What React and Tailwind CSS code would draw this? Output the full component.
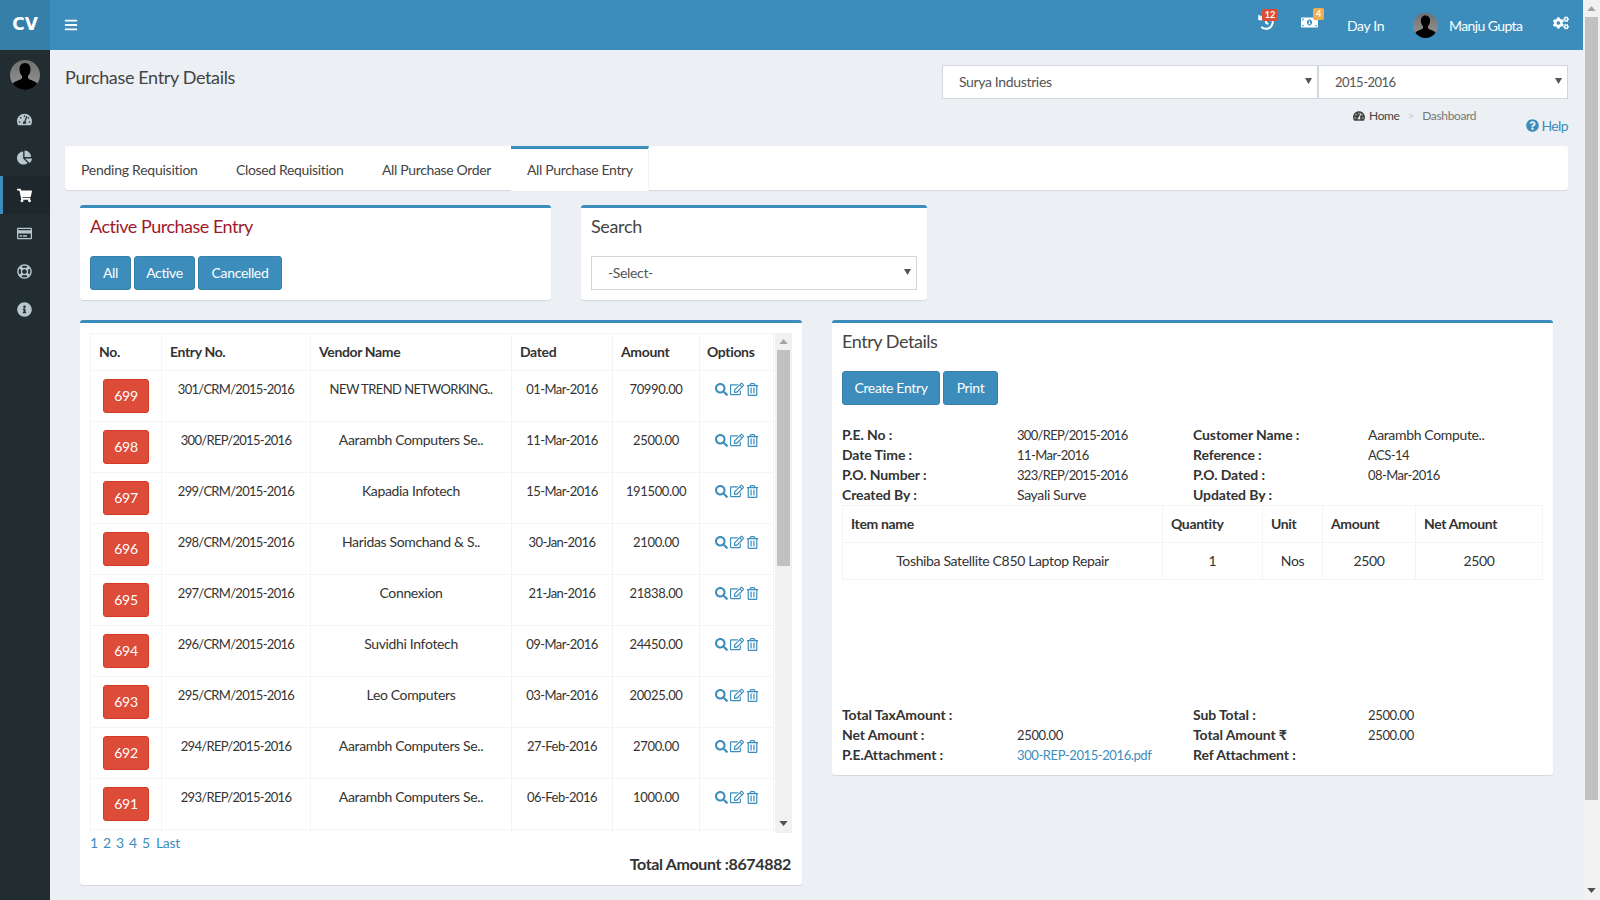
import React from "react";
import { FaTachometerAlt, FaChartPie, FaShoppingCart, FaRegCreditCard, FaRegLifeRing, FaInfoCircle, FaBars, FaHistory, FaMoneyBillAlt, FaCogs, FaSearch, FaRegEdit, FaRegTrashAlt, FaQuestionCircle } from "react-icons/fa";

const rows = [
  ["699", "301/CRM/2015-2016", "NEW TREND NETWORKING..", "01-Mar-2016", "70990.00"],
  ["698", "300/REP/2015-2016", "Aarambh Computers Se..", "11-Mar-2016", "2500.00"],
  ["697", "299/CRM/2015-2016", "Kapadia Infotech", "15-Mar-2016", "191500.00"],
  ["696", "298/CRM/2015-2016", "Haridas Somchand & S..", "30-Jan-2016", "2100.00"],
  ["695", "297/CRM/2015-2016", "Connexion", "21-Jan-2016", "21838.00"],
  ["694", "296/CRM/2015-2016", "Suvidhi Infotech", "09-Mar-2016", "24450.00"],
  ["693", "295/CRM/2015-2016", "Leo Computers", "03-Mar-2016", "20025.00"],
  ["692", "294/REP/2015-2016", "Aarambh Computers Se..", "27-Feb-2016", "2700.00"],
  ["691", "293/REP/2015-2016", "Aarambh Computers Se..", "06-Feb-2016", "1000.00"],
];

const ENTRY = "text-[13px] tracking-[-0.7px]";
const DATE = "text-[13px] tracking-[-0.55px]";
const MONEY = "text-[13px] tracking-[-0.35px]";
const CAPS = "text-[13px] tracking-[-0.55px]";

function numericClass(t) {
  if (/^\d+\/[A-Z]+\//.test(t)) return ENTRY;
  if (/^\d\d-[A-Z][a-z]+-/.test(t) || t === "ACS-14") return DATE;
  if (/^\d+\.\d\d$/.test(t)) return MONEY;
  if (t === t.toUpperCase() && /[A-Z]{4}/.test(t)) return CAPS;
  if (t.endsWith(".pdf")) return "text-[13px] tracking-[-0.4px] text-[#3c8dbc]";
  return "";
}

function Avatar({ size }) {
  return (
    <svg viewBox="0 0 30 30" width={size} height={size} className="rounded-full shrink-0">
      <defs>
        <linearGradient id="av" x1="0" y1="0" x2="0" y2="1">
          <stop offset="0" stopColor="#6f6f6f" />
          <stop offset="0.7" stopColor="#8c8c8c" />
          <stop offset="1" stopColor="#555" />
        </linearGradient>
      </defs>
      <rect width="30" height="30" fill="url(#av)" />
      <path d="M15 3c3.600 0 5.500 2.800 5.500 6.200 0 2.900-1.200 5.300-2.500 6.600v2.200c0 1.200 3.500 2.100 6.500 3.500 2.500 1.200 3.500 3 3.500 5.500v3H2v-3c0-2.500 1-4.300 3.500-5.500 3-1.400 6.500-2.300 6.500-3.500v-2.200c-1.300-1.300-2.500-3.700-2.500-6.600C9.500 5.800 11.400 3 15 3z" fill="#000" />
    </svg>
  );
}

function Arrow() {
  return (
    <svg viewBox="0 0 8 8" className="absolute right-[6px] top-[12px] w-[7px] h-[7px] pointer-events-none">
      <path d="M0 1h8L4 8z" fill="#555" />
    </svg>
  );
}

function Select({ value, className, pad }) {
  return (
    <div className={`relative ${className}`}>
      <select defaultValue={value} className={`appearance-none w-full h-[34px] bg-white border border-[#d2d6de] text-[#555] outline-none ${pad}`}>
        <option>{value}</option>
      </select>
      <Arrow />
    </div>
  );
}

function SideItem({ Icon, active }) {
  return (
    <div className={`h-[38px] flex items-center justify-center border-l-[3px] pr-[4px] ${active ? "border-[#3c8dbc] bg-[#1e282c] text-white" : "border-transparent text-[#b8c7ce]"}`}>
      <Icon className="text-[15px]" />
    </div>
  );
}

function Btn({ children, className = "" }) {
  return (
    <button className={`h-[34px] pb-px rounded-[3px] bg-[#3c8dbc] border border-[#367fa9] text-white text-[14px] ${className}`}>{children}</button>
  );
}

function Info({ items }) {
  return (
    <div className="grid grid-cols-[175px_176px_175px_1fr] text-[14px] leading-[20px] text-[#333]">
      {items.map((t, i) => (
        <div key={i} className={i % 2 === 0 ? "font-bold tracking-[-0.1px]" : numericClass(t)}>{t}</div>
      ))}
    </div>
  );
}

function ScrollArrow({ up }) {
  return (
    <svg viewBox="0 0 10 6" className="w-[9px] h-[5px] mx-auto">
      <path d={up ? "M5 0l5 6H0z" : "M0 0h10L5 6z"} fill={up ? "#a3a3a3" : "#505050"} />
    </svg>
  );
}

export default function App() {
  return (
    <div className="flex w-[1600px] h-[900px] overflow-hidden bg-[#ecf0f5] text-[#333] text-[14px] font-['Lato',sans-serif] tracking-[-0.35px]">
      <div className="flex-1 flex flex-col min-w-0">
        <header className="h-[50px] bg-[#3c8dbc] flex items-center text-white shrink-0">
          <div className="w-[50px] h-[50px] bg-[#367fa9] flex items-center justify-center font-['DejaVu_Sans',sans-serif] font-bold text-[17px] tracking-normal">CV</div>
          <FaBars className="ml-[14px] text-[14px]" />
          <div className="ml-auto flex items-center h-full">
            <div className="relative w-[17px] mr-[26px] -mt-[6px]">
              <FaHistory className="text-[16px]" />
              <span className="absolute left-[4px] -top-[5px] w-[16px] h-[12px] rounded-[2px] bg-[#dd4b39] text-[9px] font-bold leading-[12px] text-center tracking-normal">12</span>
            </div>
            <div className="relative w-[17px] mr-[29px] -mt-[5px]">
              <FaMoneyBillAlt className="text-[17px]" />
              <span className="absolute left-[12px] -top-[6px] w-[11px] h-[12px] rounded-[2px] bg-[#f0ad4e] text-[9px] font-bold leading-[12px] text-center tracking-normal">4</span>
            </div>
            <span className="w-[66px]">Day In</span>
            <Avatar size={25} />
            <span className="ml-[11px] w-[104px] tracking-[-0.6px]">Manju Gupta</span>
            <FaCogs className="text-[16px] mr-[14px] -mt-[5px]" />
          </div>
        </header>

        <main className="flex-1 flex min-h-0">
          <nav className="w-[50px] bg-[#222d32] shrink-0 flex flex-col">
            <div className="h-[50px] flex items-start justify-center pt-[10px]"><Avatar size={30} /></div>
            <SideItem Icon={FaTachometerAlt} />
            <SideItem Icon={FaChartPie} />
            <SideItem Icon={FaShoppingCart} active />
            <SideItem Icon={FaRegCreditCard} />
            <SideItem Icon={FaRegLifeRing} />
            <SideItem Icon={FaInfoCircle} />
          </nav>

          <div className="flex-1 min-w-0 px-[15px] pt-[15px]">
            <div className="flex justify-between h-[81px]">
              <h1 className="text-[18px] leading-[24px] text-[#444] font-normal">Purchase Entry Details</h1>
              <div className="w-[626px]">
                <div className="flex">
                  <Select value="Surya Industries" className="w-[376px]" pad="pl-[16px] pb-[2px]" />
                  <Select value="2015-2016" className="w-[250px] text-[13px] tracking-[-0.5px]" pad="pl-[16px] pt-[2px]" />
                </div>
                <div className="relative flex items-center h-[20px] mt-[7px] pl-[411px] text-[12px] text-[#444]">
                  <FaTachometerAlt className="text-[12px] mr-[4px]" />
                  <span>Home</span>
                  <span className="mx-[8px] text-[#ccc]">&gt;</span>
                  <span className="text-[#777]">Dashboard</span>
                  <span className="absolute right-0 top-[9px] flex items-center gap-[2px] text-[14px] tracking-[-0.6px] text-[#3c8dbc]"><FaQuestionCircle className="text-[13px]" />Help</span>
                </div>
              </div>
            </div>

            <div className="relative h-[44px] bg-white rounded-[3px] shadow-[0_1px_1px_rgba(0,0,0,0.1)] flex">
              <div className="w-[155px] pl-[16px] pt-[14px] leading-[20px] text-[#444] tracking-[-0.25px]">Pending Requisition</div>
              <div className="w-[146px] pl-[16px] pt-[14px] leading-[20px] text-[#444]">Closed Requisition</div>
              <div className="w-[145px] pl-[16px] pt-[14px] leading-[20px] text-[#444]">All Purchase Order</div>
              <div className="w-[138px] h-[45px] pl-[16px] pt-[11px] leading-[20px] text-[#444] bg-white border-t-[3px] border-r border-[#3c8dbc] border-r-[#f4f4f4]">All Purchase Entry</div>
            </div>

            <div className="mx-[15px] mt-[15px] flex gap-[30px]">
              <section className="w-[471px] h-[95px] bg-white rounded-[3px] border-t-[3px] border-[#3c8dbc] shadow-[0_1px_1px_rgba(0,0,0,0.1)] px-[10px] pt-[6px]">
                <h3 className="text-[18px] leading-[24px] text-[#a0182a] tracking-[-0.5px]">Active Purchase Entry</h3>
                <div className="flex gap-[3px] mt-[18px]">
                  <Btn className="w-[41px]">All</Btn>
                  <Btn className="w-[61px]">Active</Btn>
                  <Btn className="w-[84px]">Cancelled</Btn>
                </div>
              </section>
              <section className="w-[346px] h-[95px] bg-white rounded-[3px] border-t-[3px] border-[#3c8dbc] shadow-[0_1px_1px_rgba(0,0,0,0.1)] px-[10px] pt-[6px]">
                <h3 className="text-[18px] leading-[24px] text-[#444]">Search</h3>
                <Select value="-Select-" className="mt-[18px]" pad="pl-[16px] pb-[2px]" />
              </section>
            </div>

            <div className="mx-[15px] mt-[20px] flex gap-[30px] items-start">
              <section className="w-[722px] h-[565px] bg-white rounded-[3px] border-t-[3px] border-[#3c8dbc] shadow-[0_1px_1px_rgba(0,0,0,0.1)] px-[10px] pt-[10px]">
                <div className="flex h-[500px] overflow-hidden">
                  <table className="w-[683px] h-fit table-fixed border-collapse text-[14px] leading-[20px]">
                    <colgroup>
                      <col className="w-[71px]" />
                      <col className="w-[149px]" />
                      <col className="w-[201px]" />
                      <col className="w-[101px]" />
                      <col className="w-[87px]" />
                      <col className="w-[74px]" />
                    </colgroup>
                    <thead>
                      <tr className="h-[37px]">
                        {["No.", "Entry No.", "Vendor Name", "Dated", "Amount", "Options"].map((h) => (
                          <th key={h} className={`border border-[#f4f4f4] text-left font-bold ${h === "Options" ? "pl-[7px]" : "pl-[8px]"}`}>{h}</th>
                        ))}
                      </tr>
                    </thead>
                    <tbody>
                      {rows.map((r) => (
                        <tr key={r[0]} className="h-[51px]">
                          <td className="border border-[#f4f4f4] pt-[8px] align-top">
                            <div className="mx-auto w-[46px] h-[34px] rounded-[3px] bg-[#dd4b39] border border-[#d73925] text-white flex items-center justify-center">{r[0]}</div>
                          </td>
                          {r.slice(1).map((c, i) => (
                            <td key={i} className={`border border-[#f4f4f4] pt-[8px] align-top text-center ${numericClass(c)}`}>{c}</td>
                          ))}
                          <td className="border border-[#f4f4f4] pt-[11px] align-top">
                            <div className="flex items-center text-[#3c8dbc] text-[14px] gap-[2px] pl-[15px]">
                              <FaSearch className="text-[13px]" />
                              <FaRegEdit />
                              <FaRegTrashAlt className="text-[13px]" />
                            </div>
                          </td>
                        </tr>
                      ))}
                      <tr className="h-[51px]">
                        {[0, 1, 2, 3, 4, 5].map((i) => (
                          <td key={i} className="border border-[#f4f4f4]" />
                        ))}
                      </tr>
                    </tbody>
                  </table>
                  <div className="ml-[1px] w-[17px] h-[500px] bg-[#f1f1f1] flex flex-col pt-[6px]">
                    <ScrollArrow up />
                    <div className="mt-[6px] mx-[2px] h-[216px] bg-[#c1c1c1]" />
                    <div className="mt-auto mb-[7px]"><ScrollArrow /></div>
                  </div>
                </div>
                <div className="flex gap-[5px] leading-[20px] text-[#3c8dbc]">
                  <span className="w-[8px]">1</span><span className="w-[8px]">2</span><span className="w-[8px]">3</span><span className="w-[8px]">4</span><span className="w-[8px]">5</span>
                  <span className="ml-[1px]">Last</span>
                </div>
                <div className="text-right pr-[1px] text-[16px] leading-[22px] font-bold">Total Amount :8674882</div>
              </section>

              <section className="w-[721px] h-[455px] bg-white rounded-[3px] border-t-[3px] border-[#3c8dbc] shadow-[0_1px_1px_rgba(0,0,0,0.1)] px-[10px] pt-[6px]">
                <h3 className="text-[18px] leading-[24px] text-[#444] tracking-[-0.45px]">Entry Details</h3>
                <div className="flex gap-[3px] mt-[18px]">
                  <Btn className="w-[98px]">Create Entry</Btn>
                  <Btn className="w-[55px]">Print</Btn>
                </div>
                <div className="mt-[20px]">
                  <Info items={["P.E. No :", "300/REP/2015-2016", "Customer Name :", "Aarambh Compute..", "Date Time :", "11-Mar-2016", "Reference :", "ACS-14", "P.O. Number :", "323/REP/2015-2016", "P.O. Dated :", "08-Mar-2016", "Created By :", "Sayali Surve", "Updated By :", ""]} />
                </div>
                <table className="w-[700px] table-fixed border-collapse leading-[20px]">
                  <colgroup>
                    <col className="w-[320px]" />
                    <col className="w-[100px]" />
                    <col className="w-[60px]" />
                    <col className="w-[93px]" />
                    <col className="w-[127px]" />
                  </colgroup>
                  <thead>
                    <tr className="h-[37px]">
                      {["Item name", "Quantity", "Unit", "Amount", "Net Amount"].map((h) => (
                        <th key={h} className="border border-[#f4f4f4] pl-[8px] text-left font-bold">{h}</th>
                      ))}
                    </tr>
                  </thead>
                  <tbody>
                    <tr className="h-[37px]">
                      {["Toshiba Satellite C850 Laptop Repair", "1", "Nos", "2500", "2500"].map((c, i) => (
                        <td key={i} className="border border-[#f4f4f4] text-center">{c}</td>
                      ))}
                    </tr>
                  </tbody>
                </table>
                <div className="mt-[125px]">
                  <Info items={["Total TaxAmount :", "", "Sub Total :", "2500.00", "Net Amount :", "2500.00", "Total Amount ₹", "2500.00", "P.E.Attachment :", "300-REP-2015-2016.pdf", "Ref Attachment :", ""]} />
                </div>
              </section>
            </div>
          </div>
        </main>
      </div>

      <div className="w-[17px] h-full bg-[#f1f1f1] shrink-0 flex flex-col pt-[6px]">
        <ScrollArrow up />
        <div className="mt-[6px] mx-[2px] h-[783px] bg-[#c1c1c1]" />
        <div className="mt-auto mb-[7px]"><ScrollArrow /></div>
      </div>
    </div>
  );
}
